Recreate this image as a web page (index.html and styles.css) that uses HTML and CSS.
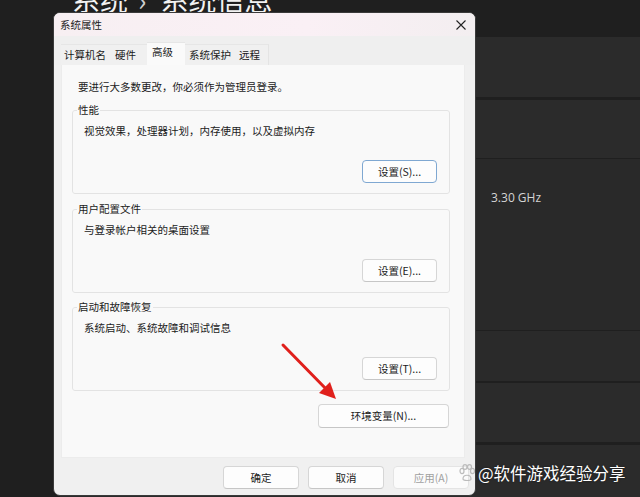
FILE: index.html
```html
<!DOCTYPE html>
<html lang="zh">
<head>
<meta charset="utf-8">
<title>系统属性</title>
<link rel="stylesheet" href="styles.css">
</head>
<body>
<div class="desktop">
  <h1 class="page-title"><span>系统</span><span class="sep">›</span><span>系统信息</span></h1>
  <div class="cards">
    <div class="card c1"></div>
    <div class="card c2"></div>
    <div class="card c3"><span class="spec">3.30 GHz</span></div>
    <div class="card c4"></div>
    <div class="card c5"></div>
    <div class="card c6"></div>
  </div>
</div>

<div class="dialog">
  <div class="titlebar">
    <span class="title">系统属性</span>
    <svg class="close" width="12" height="12" viewBox="0 0 12 12"><path d="M1.5 1.5 L10.5 10.5 M10.5 1.5 L1.5 10.5" stroke="#222" stroke-width="1.1" fill="none"/></svg>
  </div>
  <div class="tabs">
    <span class="tab">计算机名</span>
    <span class="tab">硬件</span>
    <span class="tab active">高级</span>
    <span class="tab">系统保护</span>
    <span class="tab">远程</span>
  </div>
  <div class="panel">
    <p class="intro">要进行大多数更改，你必须作为管理员登录。</p>
    <fieldset class="group">
      <legend>性能</legend>
      <p class="desc">视觉效果，处理器计划，内存使用，以及虚拟内存</p>
      <div class="row"><button class="btn small default">设置(S)...</button></div>
    </fieldset>
    <fieldset class="group">
      <legend>用户配置文件</legend>
      <p class="desc">与登录帐户相关的桌面设置</p>
      <div class="row"><button class="btn small">设置(E)...</button></div>
    </fieldset>
    <fieldset class="group">
      <legend>启动和故障恢复</legend>
      <p class="desc">系统启动、系统故障和调试信息</p>
      <div class="row"><button class="btn small">设置(T)...</button></div>
    </fieldset>
    <div class="row env"><button class="btn wide">环境变量(N)...</button></div>
  </div>
  <div class="footer">
    <button class="btn foot">确定</button>
    <button class="btn foot">取消</button>
    <button class="btn foot disabled">应用(A)</button>
  </div>
</div>

<svg class="arrow" width="80" height="80" viewBox="0 0 80 80">
  <line x1="4" y1="4" x2="50" y2="51" stroke="#e0201c" stroke-width="3" stroke-linecap="round"/>
  <polygon points="57,58 40,52 51,41" fill="#e0201c"/>
</svg>

<div class="watermark">
  <svg class="paw" width="16" height="18" viewBox="0 0 16 18">
    <ellipse cx="3" cy="7" rx="2" ry="2.6" fill="none" stroke="#bbb" stroke-width="1.2"/>
    <ellipse cx="6" cy="3" rx="2" ry="2.4" fill="none" stroke="#bbb" stroke-width="1.2"/>
    <ellipse cx="10.5" cy="3" rx="2" ry="2.4" fill="none" stroke="#bbb" stroke-width="1.2"/>
    <ellipse cx="13.5" cy="7" rx="2" ry="2.6" fill="none" stroke="#bbb" stroke-width="1.2"/>
    <path d="M4 15 C4 10 12 10 12 15 C12 17 4 17 4 15 Z" fill="none" stroke="#bbb" stroke-width="1.2"/>
  </svg>
  <span>@软件游戏经验分享</span>
</div>
</body>
</html>
```
FILE: styles.css
```css
* { box-sizing: border-box; }
html, body { margin: 0; padding: 0; }
body {
  width: 640px;
  height: 497px;
  overflow: hidden;
  background: #1f1f1f;
  font-family: "Noto Sans CJK SC", "Noto Sans", sans-serif;
  position: relative;
}
.desktop { display: flex; flex-direction: column; }
.page-title {
  margin: -15px 0 0 72px;
  font-size: 28px;
  line-height: 28px;
  font-weight: 400;
  color: #f2f2f2;
  display: flex;
  gap: 0;
  height: 28px;
}
.page-title .sep { margin: 0 14px 0 10px; color: #cfcfcf; }
.cards {
  margin: 24px 0 0 60px;
  display: flex;
  flex-direction: column;
}
.card { background: #2b2b2b; }
.c1 { height: 60px; }
.c2 { height: 58px; margin-top: 3px; }
.c3 { height: 171px; margin-top: 1px; background: #292929; padding: 24px 0 0 431px; }
.c4 { height: 50px; margin-top: 1px; background: #2a2a2a; }
.c5 { height: 59px; margin-top: 2px; }
.c6 { height: 60px; margin-top: 3px; }
.spec {
  font-family: "Open Sans", "Noto Sans", sans-serif;
  font-size: 12px;
  color: #d4d4d4;
}

.dialog {
  position: absolute;
  left: 53px;
  top: 12px;
  width: 423px;
  height: 484px;
  background: #f0f0f0;
  border: 1px solid #3a3a3a;
  border-radius: 7px;
  overflow: hidden;
  display: flex;
  flex-direction: column;
  color: #1b1b1b;
  font-size: 10.5px;
}
.titlebar {
  height: 23px;
  display: flex;
  align-items: center;
  justify-content: space-between;
  padding: 0 8px 0 6px;
  background: linear-gradient(90deg, #f7eff2 0%, #faf0f5 60%, #f3eef0 100%);
}
.title { line-height: 16px; }
.close { margin-top: 1px; }
.tabs {
  display: flex;
  align-items: flex-end;
  height: 29px;
  padding: 0 0 0 7px;
  background: #efefef;
}
.tab {
  height: 21px;
  line-height: 20px;
  background: #f0f0f0;
  border-top: 1px solid #e6e6e6;
}
.tab:nth-child(1) { padding: 0 5px 0 3px; }
.tab:nth-child(2) { padding: 0 11px 0 4px; }
.tab.active {
  height: 23px;
  background: #fafafa;
  padding: 0 12px 0 5px;
  line-height: 18px;
}
.tab:nth-child(4) { padding: 0 4px 0 4px; }
.tab:nth-child(5) { padding: 0 8px 0 4px; border-right: 1px solid #e4e4e4; }
.panel {
  margin: 0 10px 0 7px;
  height: 393px;
  background: #f9f9f9;
  border: 1px solid #ececec;
  border-top: none;
  padding: 14px 14px 0 10px;
  display: flex;
  flex-direction: column;
}
.intro { margin: 0 0 0 6px; line-height: 16px; }
.group {
  margin: 7px 0 0 0;
  border: 1px solid #e3e3e3;
  border-radius: 3px;
  padding: 5px 12px 10px 11px;
  min-width: 0;
}
.group + .group { margin-top: 7px; }
.group:nth-of-type(3) { margin-top: 6px; }
.group legend {
  padding: 0 1px;
  margin-left: -7px;
  line-height: 16px;
}
.desc { margin: 0; line-height: 16px; }
.row { display: flex; justify-content: flex-end; }
.group .row { margin-top: 21px; }
.btn {
  font-family: inherit;
  font-size: 10.5px;
  color: #1b1b1b;
  background: #fdfdfd;
  border: 1px solid #d6d6d6;
  border-bottom-color: #c6c6c6;
  border-radius: 4px;
  padding: 0;
  line-height: 16px;
}
.btn.small { width: 75px; height: 23px; }
.btn.default { border: 1px solid #7fa8d2; }
.env { margin-top: 13px; padding-right: 1px; }
.btn.wide { width: 131px; height: 24px; }
.footer {
  display: flex;
  justify-content: flex-end;
  gap: 9px;
  padding: 8px 6px 0 0;
}
.btn.foot { width: 76px; height: 23px; }
.btn.disabled { color: #a0a0a0; border-color: #e4e4e4; background: #fbfbfb; }

.arrow {
  position: absolute;
  left: 279px;
  top: 341px;
}
.watermark {
  position: absolute;
  left: 459px;
  top: 461px;
  display: flex;
  align-items: center;
  gap: 3px;
  color: #ffffff;
  font-size: 16.5px;
  line-height: 24px;
  text-shadow: 0 0 2px rgba(0,0,0,0.5);
}
.paw { flex: none; }
```
